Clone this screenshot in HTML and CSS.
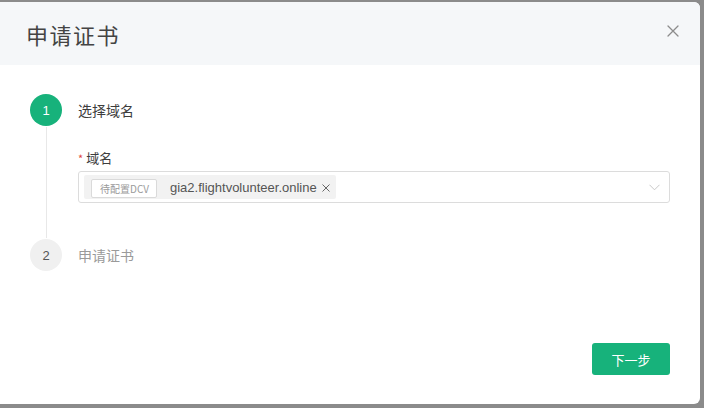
FILE: index.html
```html
<!DOCTYPE html>
<html lang="zh-CN">
<head>
<meta charset="utf-8">
<title>申请证书</title>
<link rel="stylesheet" href="styles.css">
</head>
<body>
<div class="dialog">
  <div class="dialog-header">
    <h1 class="dialog-title">申请证书</h1>
    <button class="close-btn" aria-label="关闭">
      <svg width="12" height="12" viewBox="0 0 12 12"><path d="M1 1L11 11M11 1L1 11" stroke="#8c8c8c" stroke-width="1.3" fill="none" stroke-linecap="round"/></svg>
    </button>
  </div>
  <div class="dialog-body">
    <div class="step step-active">
      <div class="step-rail">
        <div class="step-dot">1</div>
        <div class="step-line"></div>
      </div>
      <div class="step-content">
        <div class="step-title">选择域名</div>
        <div class="field-label"><span class="req">*</span>域名</div>
        <div class="select">
          <div class="chip">
            <span class="chip-badge">待配置DCV</span>
            <span class="chip-text">gia2.flightvolunteer.online</span>
            <svg class="chip-close" width="8" height="8" viewBox="0 0 8 8"><path d="M0.5 0.5L7.5 7.5M7.5 0.5L0.5 7.5" stroke="#666" stroke-width="1" fill="none"/></svg>
          </div>
          <svg class="chevron" width="11" height="7" viewBox="0 0 11 7"><path d="M0.5 0.8L5.5 5.8L10.5 0.8" stroke="#c8c8c8" stroke-width="1" fill="none"/></svg>
        </div>
      </div>
    </div>
    <div class="step step-wait">
      <div class="step-rail">
        <div class="step-dot">2</div>
      </div>
      <div class="step-content">
        <div class="step-title">申请证书</div>
      </div>
    </div>
  </div>
  <div class="dialog-footer">
    <button class="btn-primary">下一步</button>
  </div>
</div>
</body>
</html>
```

FILE: styles.css
```css
html, body {
  margin: 0;
  padding: 0;
}
body {
  background: #8b8b8b;
  width: 704px;
  height: 408px;
  overflow: hidden;
  font-family: "Liberation Sans", "Noto Sans CJK SC", sans-serif;
}
.dialog {
  margin-top: 2px;
  width: 700px;
  height: 402px;
  background: #fff;
  border-radius: 0 6px 6px 0;
  overflow: hidden;
  display: flex;
  flex-direction: column;
}
.dialog-header {
  height: 63px;
  flex: none;
  background: #f5f7f9;
  display: flex;
  align-items: center;
  justify-content: space-between;
  padding: 0 20px 0 26px;
}
.dialog-title {
  margin: 0;
  font-size: 22px;
  font-weight: normal;
  color: #444;
  letter-spacing: 1.5px;
  font-family: "Noto Sans CJK SC", sans-serif;
}
.close-btn {
  border: none;
  background: none;
  padding: 0;
  width: 14px;
  height: 14px;
  display: flex;
  align-items: center;
  justify-content: center;
  margin-top: -6px;
}
.dialog-body {
  flex: 1;
  padding: 29px 30px 0 30px;
}
.step {
  display: flex;
}
.step-rail {
  width: 32px;
  display: flex;
  flex-direction: column;
  align-items: center;
  flex: none;
}
.step-dot {
  width: 32px;
  height: 32px;
  border-radius: 50%;
  display: flex;
  align-items: center;
  justify-content: center;
  font-size: 13px;
  flex: none;
}
.step-active .step-dot {
  background: #17b27b;
  color: #fff;
}
.step-wait .step-dot {
  background: #f0f0f0;
  color: #555;
}
.step-line {
  flex: 1;
  width: 1px;
  background: #e8e8e8;
  margin: 1px 0 1px;
}
.step-content {
  flex: 1;
  margin-left: 16px;
}
.step-active .step-content {
  padding-bottom: 36px;
}
.step-title {
  height: 32px;
  line-height: 32px;
  font-size: 14px;
  font-family: "Noto Sans CJK SC", sans-serif;
}
.step-active .step-title {
  color: #3d3d3d;
}
.step-wait .step-title {
  color: #9a9a9a;
}
.field-label {
  margin-top: 22px;
  height: 20px;
  line-height: 20px;
  font-size: 13px;
  color: #3d3d3d;
  font-family: "Noto Sans CJK SC", sans-serif;
}
.req {
  color: #e0483f;
  font-size: 11px;
  margin-right: 3px;
  vertical-align: top;
}
.select {
  margin-top: 3px;
  height: 32px;
  box-sizing: border-box;
  border: 1px solid #dcdcdc;
  border-radius: 3px;
  display: flex;
  align-items: center;
  padding: 0 9px 0 5px;
}
.chip {
  height: 24px;
  background: #f2f2f2;
  border-radius: 2px;
  display: flex;
  align-items: center;
  padding: 0 6px 0 7px;
}
.chip-badge {
  height: 19px;
  box-sizing: border-box;
  border: 1px solid #dadada;
  background: #fff;
  border-radius: 2px;
  font-size: 10px;
  color: #9a9a9a;
  padding: 0 7px 0 8px;
  line-height: 17px;
  font-family: "Noto Sans CJK SC", sans-serif;
  display: flex;
  align-items: center;
  margin-top: 2px;
}
.chip-text {
  margin-left: 13px;
  font-size: 13px;
  color: #555;
}
.chip-close {
  margin-left: 5px;
  margin-top: 1px;
}
.chevron {
  margin-left: auto;
}
.dialog-footer {
  flex: none;
  display: flex;
  justify-content: flex-end;
  padding: 0 30px 29px 0;
}
.btn-primary {
  width: 78px;
  height: 32px;
  border: none;
  border-radius: 3px;
  background: #17b27b;
  color: #fff;
  font-size: 13px;
  font-family: "Noto Sans CJK SC", sans-serif;
  padding: 0;
}
```
